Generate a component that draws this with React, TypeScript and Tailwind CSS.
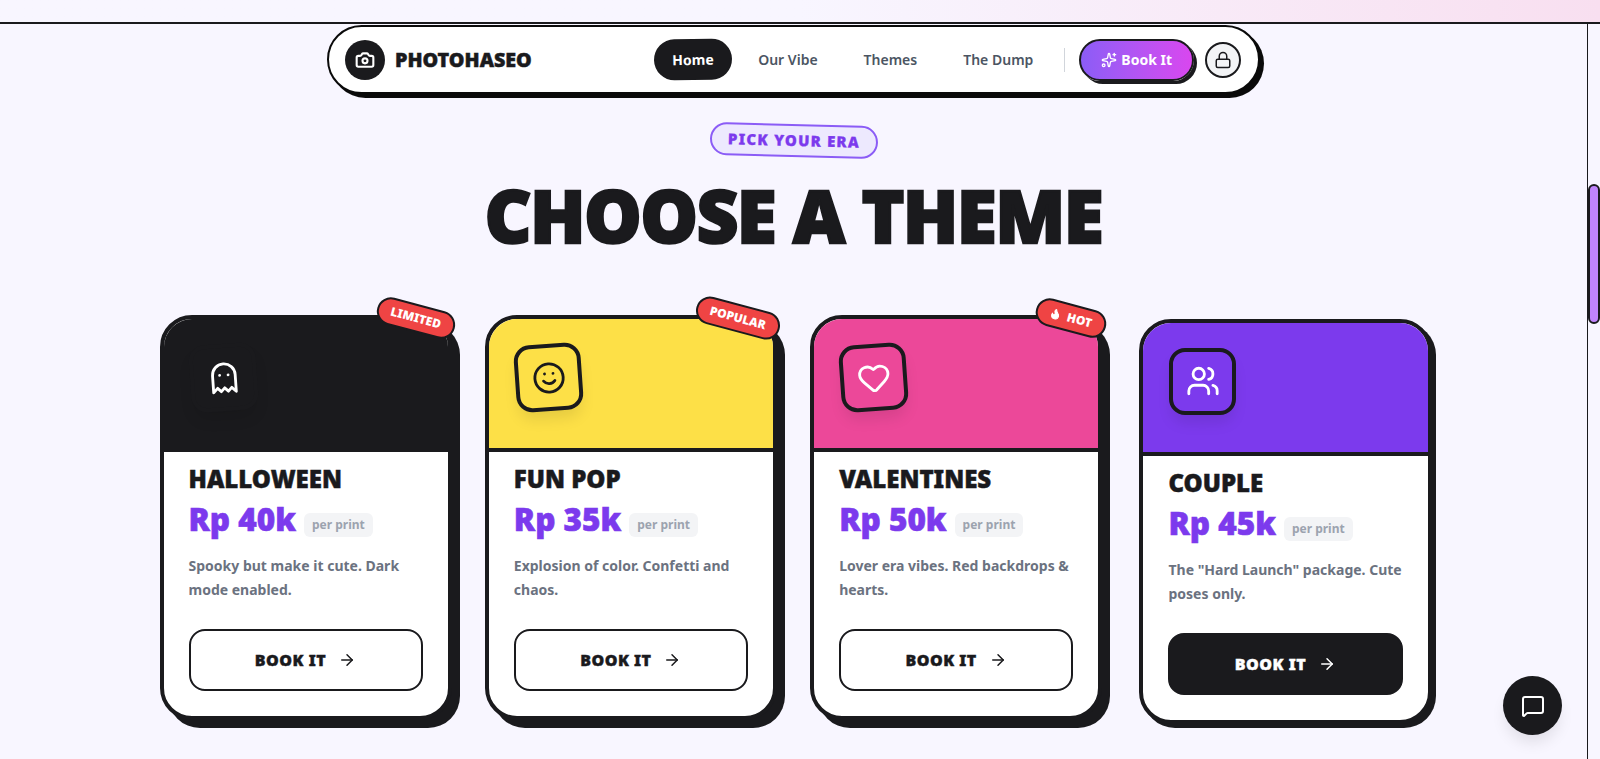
import { ArrowRight, Camera, Flame, Ghost, Heart, Lock, MessageSquare, Smile, Sparkles, Users } from "lucide-react"
import type { ReactNode } from "react"

interface Theme {
  title: string
  price: string
  description: string
  header: string
  iconBox: string
  icon: ReactNode
  tag?: ReactNode
  active?: boolean
}

const themes: Theme[] = [
  {
    title: "HALLOWEEN",
    price: "Rp 40k",
    description: "Spooky but make it cute. Dark mode enabled.",
    header: "bg-[#1a1a1d]",
    iconBox: "-rotate-[4deg] text-white border-[#1a1a1d]",
    icon: <Ghost size={34} />,
    tag: "LIMITED",
  },
  {
    title: "FUN POP",
    price: "Rp 35k",
    description: "Explosion of color. Confetti and chaos.",
    header: "bg-[#fde047]",
    iconBox: "-rotate-[4deg] text-[#1a1a1d] border-[#1a1a1d]",
    icon: <Smile size={34} />,
    tag: "POPULAR",
  },
  {
    title: "VALENTINES",
    price: "Rp 50k",
    description: "Lover era vibes. Red backdrops & hearts.",
    header: "bg-[#ec4899]",
    iconBox: "-rotate-[4deg] text-white border-[#1a1a1d]",
    icon: <Heart size={34} />,
    tag: (
      <span className="flex items-center gap-[6px]">
        <Flame size={12} fill="currentColor" /> HOT
      </span>
    ),
  },
  {
    title: "COUPLE",
    price: "Rp 45k",
    description: 'The "Hard Launch" package. Cute poses only.',
    header: "bg-[#7c3aed]",
    iconBox: "text-white border-[#1a1a1d]",
    icon: <Users size={34} />,
    active: true,
  },
]

function ThemeCard({ theme }: { theme: Theme }) {
  return (
    <div
      className={`relative h-[405px] rounded-[32px] border-4 border-[#1a1a1d] bg-white ${
        theme.active
          ? "translate-x-1 translate-y-1 shadow-[4px_4px_0_#1a1a1d]"
          : "shadow-[8px_8px_0_#1a1a1d]"
      }`}
    >
      <div className="h-full overflow-hidden rounded-[28px]">
        {/* Color header */}
        <div className={`h-[133px] border-b-4 border-[#1a1a1d] pt-[25px] pl-[26px] ${theme.header}`}>
          <div
            className={`flex h-[67px] w-[67px] items-center justify-center rounded-2xl border-4 shadow-[0_10px_15px_-3px_rgba(0,0,0,0.1)] ${theme.iconBox}`}
          >
            {theme.icon}
          </div>
        </div>

        {/* Body */}
        <div className="px-[25px] pt-[11px]">
          <h3 className="text-2xl leading-8 font-black text-[#1a1a1d] [-webkit-text-stroke:0.5px_#1a1a1d]">
            {theme.title}
          </h3>
          <div className="mt-[6px] flex items-center gap-2">
            <span className="text-[31.5px] leading-9 font-black text-[#7c3aed] [-webkit-text-stroke:0.6px_#7c3aed]">
              {theme.price}
            </span>
            <span className="mt-3 rounded-md bg-[#f3f4f6] px-2 py-1 text-xs font-bold text-[#9ca3af]">per print</span>
          </div>
          <p className="mt-[17px] text-sm leading-6 font-bold text-[#6b7280]">{theme.description}</p>
          <button
            className={`mt-[27px] flex h-[62px] w-full items-center justify-center gap-3 rounded-2xl border-2 border-[#1a1a1d] text-base font-black tracking-[0.03em] [-webkit-text-stroke:0.4px_currentColor] ${
              theme.active ? "bg-[#1a1a1d] text-white" : "bg-white text-[#1a1a1d]"
            }`}
          >
            BOOK IT <ArrowRight size={18} />
          </button>
        </div>
      </div>

      {/* Corner tag */}
      {theme.tag && (
        <div className="absolute top-[-15px] right-[-8px] rotate-[15deg] rounded-full border-2 border-[#1a1a1d] bg-[#ef4444] px-3 py-1 text-xs font-black text-white">
          {theme.tag}
        </div>
      )}
    </div>
  )
}

export default function App() {
  return (
    <div className="relative flex h-[759px] flex-col overflow-hidden bg-[#f8f6ff] font-['Noto_Sans',sans-serif]">
      {/* Top strip */}
      <div className="h-[24px] shrink-0 border-b-2 border-[#1a1a1d] bg-gradient-to-r from-[#f8f6ff] via-[#f8f6ff] to-[#f8dff0]" />

      <div className="flex min-h-0 flex-1">
        <main className="flex min-w-0 flex-1 flex-col items-center">
          {/* Nav */}
          <nav className="mt-[1px] flex h-[69px] w-[933px] items-center rounded-full border-2 border-[#0a0a0a] bg-white pr-[17px] pl-4 shadow-[4px_4px_0_#0a0a0a]">
            <div className="flex h-10 w-10 items-center justify-center rounded-full bg-[#1a1a1d] text-white">
              <Camera size={20} strokeWidth={2.5} />
            </div>
            <span className="ml-[10px] text-[19.7px] font-black text-[#1a1a1d] [-webkit-text-stroke:0.5px_#1a1a1d]">
              PHOTOHASEO
            </span>

            <div className="ml-auto flex items-center gap-[6px] text-sm font-semibold text-[#4b5563]">
              <a className="flex h-[41px] w-[78px] -rotate-1 items-center justify-center rounded-full bg-[#1a1a1d] font-bold text-white">
                Home
              </a>
              <a className="px-5 py-[10px]">Our Vibe</a>
              <a className="px-5 py-[10px]">Themes</a>
              <a className="px-5 py-[10px]">The Dump</a>
            </div>
            <div className="ml-[11px] h-6 w-[1px] bg-[#d1d5db]" />
            <button className="ml-[14px] flex h-[42px] items-center gap-1 rounded-full border-2 border-[#1a1a1d] bg-gradient-to-r from-[#8b5cf6] to-[#d946ef] px-5 text-sm font-bold text-white shadow-[3px_3px_0_#1a1a1d]">
              <Sparkles size={16} /> Book It
            </button>
            <button className="ml-[11px] flex h-9 w-9 items-center justify-center rounded-full border-2 border-[#1a1a1d] bg-[#f3f4f6] text-[#1a1a1d]">
              <Lock size={18} />
            </button>
          </nav>

          {/* Heading */}
          <div className="mt-[30px] rotate-[1.5deg] rounded-full border-2 border-[#8b5cf6] bg-[#ede9fe] px-4 py-[3px] text-[15px] font-black tracking-[0.08em] text-[#7c3aed] [-webkit-text-stroke:0.3px_#7c3aed]">
            PICK YOUR ERA
          </div>
          <h1 className="mt-[13px] text-[72px] leading-[90px] font-black tracking-[-0.016em] text-[#1a1a1d] [-webkit-text-stroke:2.5px_#1a1a1d]">
            CHOOSE A THEME
          </h1>

          {/* Cards */}
          <div className="mt-[55px] grid w-[1268px] grid-cols-4 gap-x-[33.33px]">
            {themes.map((theme) => (
              <ThemeCard key={theme.title} theme={theme} />
            ))}
          </div>
        </main>

        {/* Scrollbar */}
        <div className="w-[13px] shrink-0 border-l-[1.5px] border-[#1a1a1d] pt-[160px]">
          <div className="h-[140px] rounded-full border-2 border-[#1a1a1d] bg-[#c084fc]" />
        </div>
      </div>

      {/* Chat button */}
      <button className="absolute right-[38px] bottom-[24px] flex h-[59px] w-[59px] items-center justify-center rounded-full bg-[#1a1a1d] text-white shadow-[0_10px_15px_-3px_rgba(0,0,0,0.1)]">
        <MessageSquare size={24} />
      </button>
    </div>
  )
}
